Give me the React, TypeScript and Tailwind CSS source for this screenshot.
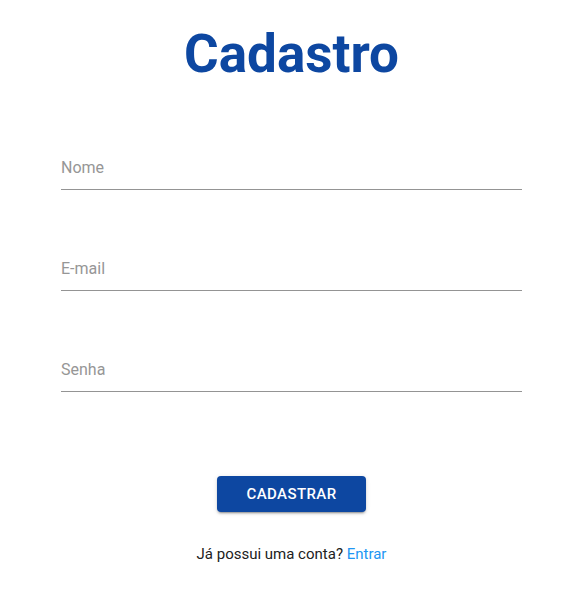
import React from "react";

function Field({ label, type = "text" }: { label: string; type?: string }) {
  return (
    <div className="w-full h-[35px] pt-px border-b border-[#949494] flex items-start">
      <input
        type={type}
        placeholder={label}
        className="w-full h-6 bg-transparent outline-none text-base leading-6 text-[#212121] placeholder:text-[#969696] font-['Roboto',sans-serif]"
      />
    </div>
  );
}

export default function App() {
  return (
    <div className="w-[583px] min-h-[591px] bg-white font-['Roboto',sans-serif] flex flex-col items-center">
      <h1 className="mt-[28px] text-[53px] leading-[53px] font-bold text-[#0d47a1]">Cadastro</h1>
      <form className="w-[461px] mt-[74px] flex flex-col gap-[66px]" onSubmit={(e) => e.preventDefault()}>
        <Field label="Nome" />
        <Field label="E-mail" type="email" />
        <Field label="Senha" type="password" />
      </form>
      <button
        type="button"
        className="mt-[84px] w-[149px] h-9 rounded bg-[#0d47a1] text-white text-[15px] font-medium tracking-[0.4px] uppercase shadow-[0px_3px_1px_-2px_rgba(0,0,0,0.2),0px_2px_2px_0px_rgba(0,0,0,0.14),0px_1px_5px_0px_rgba(0,0,0,0.12)]"
      >
        Cadastrar
      </button>
      <p className="mt-[30px] text-[15px] leading-6 text-[#212121]">
        Já possui uma conta? <a className="text-[#2196f3]">Entrar</a>
      </p>
    </div>
  );
}
